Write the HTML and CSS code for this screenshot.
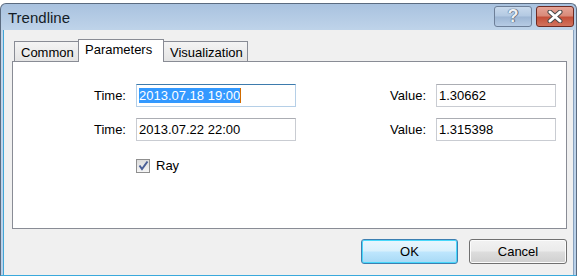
FILE: index.html
```html
<!DOCTYPE html>
<html lang="en">
<head>
<meta charset="UTF-8">
<title>Trendline</title>
<link rel="stylesheet" href="styles.css">
</head>
<body>
<div class="window">
    <div class="titlebar">
        <span class="title">Trendline</span>
        <div class="caption-buttons">
            <button class="cap help"><span>?</span></button>
            <button class="cap close">
                <svg width="16" height="13" viewBox="0 0 16 13">
                    <path d="M3 2 L13 11 M13 2 L3 11" stroke="#4b4b4b" stroke-width="5" stroke-linecap="round"/>
                    <path d="M3 2 L13 11 M13 2 L3 11" stroke="#ffffff" stroke-width="3" stroke-linecap="round"/>
                </svg>
            </button>
        </div>
    </div>
    <div class="client">
        <div class="tabs">
            <div class="tab">Common</div>
            <div class="tab active">Parameters</div>
            <div class="tab">Visualization</div>
        </div>
        <div class="panel">
            <div class="form">
                <label>Time:</label>
                <div class="field focus"><span class="sel">2013.07.18 19:00</span><span class="caret"></span></div>
                <label>Value:</label>
                <div class="field">1.30662</div>

                <label>Time:</label>
                <div class="field">2013.07.22 22:00</div>
                <label>Value:</label>
                <div class="field">1.315398</div>

                <div class="check-row">
                    <span class="checkbox">
                        <svg width="11" height="11" viewBox="0 0 11 11">
                            <path d="M1.5 5.5 L4 9 L9.5 1.5" fill="none" stroke="#4a5f97" stroke-width="2"/>
                        </svg>
                    </span>
                    <span>Ray</span>
                </div>
            </div>
        </div>
        <div class="actions">
            <button class="btn default">OK</button>
            <button class="btn">Cancel</button>
        </div>
    </div>
</div>
</body>
</html>
```

FILE: styles.css
```css
body {
    margin: 0;
    background: #fff;
    font-family: "Liberation Sans", Arial, sans-serif;
    font-size: 13px;
    color: #000;
}
.window {
    margin-top: 3px;
    width: 577px;
    height: 273px;
    box-sizing: border-box;
    border: 1px solid #5b6b80;
    border-bottom-color: #3aa9dc;
    border-radius: 6px 6px 0 0;
    background: linear-gradient(#a9c2df, #c2d6eb 30px, #b9d1ea);
    display: flex;
    flex-direction: column;
    overflow: hidden;
}
.titlebar {
    height: 26px;
    flex: none;
    display: flex;
    justify-content: space-between;
    align-items: flex-start;
}
.title {
    font-size: 15px;
    color: #141c26;
    padding: 5px 0 0 7px;
}
.caption-buttons {
    display: flex;
    gap: 4px;
    padding: 2px 2px 0 0;
}
.cap {
    height: 21px;
    border-radius: 3px;
    padding: 0;
    display: flex;
    align-items: center;
    justify-content: center;
}
.help {
    width: 38px;
    border: 1px solid #6d7f98;
    background: linear-gradient(#c8d9ec, #b3c9e2 48%, #9db6d4 52%, #b6cbe4);
}
.help span {
    font-size: 18px;
    font-weight: bold;
    color: #eef0f3;
    text-shadow: 0 0 1px #45556a, 0 0 1px #45556a, 1px 0 0 #6a7a8e;
}
.close {
    width: 38px;
    border: 1px solid #6e2a22;
    background: linear-gradient(#e6a497, #d98b7a 45%, #c4503a 55%, #d2735e);
}
.client {
    flex: 1;
    background: #f0f0f0;
    margin: 0 2px;
    padding: 9px 6px 0 8px;
    border-left: 1px solid #42a6d6;
    border-right: 1px solid #8aa3bf;
}
.tabs {
    display: flex;
    align-items: flex-end;
    padding-left: 2px;
    position: relative;
    z-index: 1;
}
.tab {
    height: 20px;
    box-sizing: border-box;
    padding: 3px 6px 0;
    border: 1px solid #898c95;
    border-bottom: none;
    background: linear-gradient(#f4f4f4, #e4e4e4);
    margin-left: -1px;
    white-space: nowrap;
}
.tab:first-child {
    width: 65px;
    margin-left: 0;
}
.tab.active {
    height: 23px;
    width: 86px;
    background: #fff;
    padding-top: 2px;
    margin-bottom: -1px;
}
.tab:last-child {
    width: 85px;
}
.panel {
    height: 168px;
    box-sizing: border-box;
    border: 1px solid #898c95;
    background: #fff;
    padding-top: 22px;
}
.form {
    display: grid;
    grid-template-columns: 113px 160px 120px 120px;
    column-gap: 10px;
    row-gap: 11px;
    grid-auto-rows: 23px;
}
.form label {
    text-align: right;
    align-self: center;
}
.field {
    box-sizing: border-box;
    border: 1px solid #c9ccd2;
    border-top-color: #abadb3;
    padding: 3px 0 0 2px;
    white-space: nowrap;
    display: flex;
    align-items: flex-start;
}
.field.focus {
    border-color: #b5cfe7;
    border-top-color: #3d7bad;
}
.sel {
    background: #3399ff;
    color: #fff;
}
.caret {
    width: 1px;
    height: 15px;
    background: #d06b00;
}
.check-row {
    grid-column: 2 / 5;
    display: flex;
    align-items: center;
    gap: 6px;
    margin-top: 5px;
    height: 17px;
}
.checkbox {
    width: 14px;
    height: 14px;
    box-sizing: border-box;
    border: 1px solid #8f8f8f;
    background: linear-gradient(#dcdcdc, #f6f6f6);
    display: flex;
    align-items: center;
    justify-content: center;
}
.actions {
    display: flex;
    justify-content: flex-end;
    gap: 11px;
    padding-top: 10px;
}
.btn {
    width: 98px;
    height: 25px;
    font-family: "Liberation Sans", Arial, sans-serif;
    font-size: 13px;
    color: #000;
    border: 1px solid #707070;
    border-radius: 3px;
    background: linear-gradient(#f2f2f2, #ebebeb 48%, #dddddd 52%, #cfcfcf);
    box-shadow: inset 0 0 0 1px #fcfcfc;
}
.btn.default {
    width: 97px;
    border-color: #3c7fb1;
    background: linear-gradient(#eaf6fd, #d9f0fc 48%, #bee6fd 52%, #a7d9f5);
    box-shadow: inset 0 0 0 1px #48d8fb;
}
```
